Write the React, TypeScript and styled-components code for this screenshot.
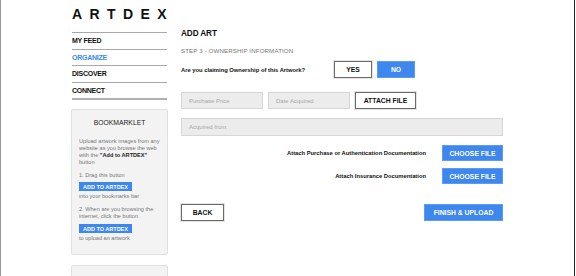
import React from 'react';
import styled, { createGlobalStyle } from 'styled-components';

const blue = '#3d87ef';

const GlobalStyle = createGlobalStyle`
  body {
    margin: 0;
    background: #fff;
    font-family: "Liberation Sans", Arial, sans-serif;
  }
`;

const Frame = styled.div`
  width: 575px;
  height: 276px;
  box-sizing: border-box;
  border-left: 1px solid #9a9a9a;
  border-right: 1px solid #222;
  padding-left: 70px;
  display: grid;
  grid-template-columns: 97px 322px;
  column-gap: 13px;
  overflow: hidden;
  white-space: nowrap;
`;

const Sidebar = styled.aside`
  display: flex;
  flex-direction: column;
`;

const Logo = styled.div`
  height: 32px;
  box-sizing: border-box;
  padding: 7px 0 0 1px;
  font-size: 14px;
  line-height: 14px;
  font-weight: bold;
  letter-spacing: 7.4px;
  color: #111;
`;

const Nav = styled.ul`
  list-style: none;
  margin: 0 1px;
  padding: 0;
  border-bottom: 2px solid #b0b0b0;
`;

const NavItem = styled.li<{ $active?: boolean }>`
  height: 15.6px;
  border-top: 1px solid #a8a8a8;
  display: flex;
  align-items: center;
  font-size: 7px;
  font-weight: bold;
  letter-spacing: -0.25px;
  color: ${(p) => (p.$active ? blue : '#111')};
`;

const Panel = styled.div`
  margin-top: 9px;
  background: #f3f3f3;
  border: 1px solid #e0e0e0;
  border-radius: 2px;
  padding: 9px 7px 12px;
  display: flex;
  flex-direction: column;
  align-items: flex-start;
`;

const EmptyPanel = styled(Panel)`
  margin-top: 10px;
  height: 30px;
`;

const PanelTitle = styled.div`
  align-self: stretch;
  text-align: center;
  font-size: 6.8px;
  line-height: 8px;
  color: #222;
  margin-bottom: 11px;
`;

const Note = styled.p<{ $gap?: number }>`
  margin: ${(p) => p.$gap ?? 0}px 0 0;
  font-size: 5.6px;
  line-height: 7px;
  color: #777;
  b {
    color: #222;
  }
`;

const MiniButton = styled.div<{ $gap?: number }>`
  margin-top: ${(p) => p.$gap ?? 3}px;
  margin-bottom: 2px;
  width: 53px;
  height: 9px;
  background: ${blue};
  color: #fff;
  font-size: 5.5px;
  font-weight: bold;
  display: flex;
  align-items: center;
  justify-content: center;
`;

const Main = styled.main`
  display: flex;
  flex-direction: column;
  padding-top: 29px;
`;

const Title = styled.h1`
  margin: 0;
  font-size: 8.2px;
  line-height: 10px;
  letter-spacing: -0.1px;
  color: #111;
`;

const Step = styled.h2`
  margin: 8px 0 0;
  font-size: 6.2px;
  line-height: 8px;
  font-weight: normal;
  color: #777;
  letter-spacing: 0.1px;
`;

const Row = styled.div<{ $gap?: number; $top: number; $end?: boolean }>`
  display: flex;
  align-items: center;
  gap: ${(p) => p.$gap ?? 5}px;
  margin-top: ${(p) => p.$top}px;
  justify-content: ${(p) => (p.$end ? 'flex-end' : 'flex-start')};
`;

const Question = styled.span`
  flex: 0 0 148px;
  font-size: 5.8px;
  font-weight: bold;
  color: #111;
`;

const Button = styled.div<{ $primary?: boolean; $w: number; $h?: number }>`
  width: ${(p) => p.$w}px;
  height: ${(p) => p.$h ?? 17}px;
  box-sizing: border-box;
  display: flex;
  align-items: center;
  justify-content: center;
  font-size: 6.8px;
  font-weight: bold;
  background: ${(p) => (p.$primary ? blue : '#fff')};
  color: ${(p) => (p.$primary ? '#fff' : '#111')};
  border: 1px solid ${(p) => (p.$primary ? '#5e9cf3' : '#6a6a6a')};
  box-shadow: ${(p) => (p.$primary ? 'none' : '0 0 0 1px #e4e4e4')};
`;

const Input = styled.div<{ $w: number; $h?: number }>`
  width: ${(p) => p.$w}px;
  height: ${(p) => p.$h ?? 17}px;
  box-sizing: border-box;
  background: #ececec;
  border: 1px solid #d6d6d6;
  padding-left: 7px;
  display: flex;
  align-items: center;
  font-size: 6px;
  color: #a8a8a8;
`;

const DocLabel = styled.span`
  font-size: 5.8px;
  font-weight: bold;
  color: #111;
`;

const Footer = styled.div`
  margin-top: 20px;
  display: flex;
  justify-content: space-between;
`;

export default function App() {
  return (
    <>
      <GlobalStyle />
      <Frame>
        <Sidebar>
          <Logo>ARTDEX</Logo>
          <Nav>
            <NavItem>MY FEED</NavItem>
            <NavItem $active>ORGANIZE</NavItem>
            <NavItem>DISCOVER</NavItem>
            <NavItem>CONNECT</NavItem>
          </Nav>
          <Panel>
            <PanelTitle>BOOKMARKLET</PanelTitle>
            <Note>
              Upload artwork images from any
              <br />
              website as you browse the web
              <br />
              with the <b>"Add to ARTDEX"</b>
              <br />
              button
            </Note>
            <Note $gap={6}>1. Drag this button</Note>
            <MiniButton>ADD TO ARTDEX</MiniButton>
            <Note>into your bookmarks bar</Note>
            <Note $gap={6}>
              2. When are you browsing the
              <br />
              internet, click the button
            </Note>
            <MiniButton $gap={4}>ADD TO ARTDEX</MiniButton>
            <Note>to upload an artwork</Note>
          </Panel>
          <EmptyPanel />
        </Sidebar>
        <Main>
          <Title>ADD ART</Title>
          <Step>STEP 3 - OWNERSHIP INFORMATION</Step>
          <Row $top={6}>
            <Question>Are you claiming Ownership of this Artwork?</Question>
            <Button $w={38}>YES</Button>
            <Button $w={38} $primary>
              NO
            </Button>
          </Row>
          <Row $top={14}>
            <Input $w={82}>Purchase Price</Input>
            <Input $w={82}>Date Acquired</Input>
            <Button $w={61}>ATTACH FILE</Button>
          </Row>
          <Row $top={9}>
            <Input $w={322} $h={18}>
              Acquired from
            </Input>
          </Row>
          <Row $top={9} $gap={16} $end>
            <DocLabel>Attach Purchase or Authentication Documentation</DocLabel>
            <Button $w={61} $h={16} $primary>
              CHOOSE FILE
            </Button>
          </Row>
          <Row $top={7} $gap={16} $end>
            <DocLabel>Attach Insurance Documentation</DocLabel>
            <Button $w={61} $h={16} $primary>
              CHOOSE FILE
            </Button>
          </Row>
          <Footer>
            <Button $w={43}>BACK</Button>
            <Button $w={79} $primary>
              FINISH &amp; UPLOAD
            </Button>
          </Footer>
        </Main>
      </Frame>
    </>
  );
}
